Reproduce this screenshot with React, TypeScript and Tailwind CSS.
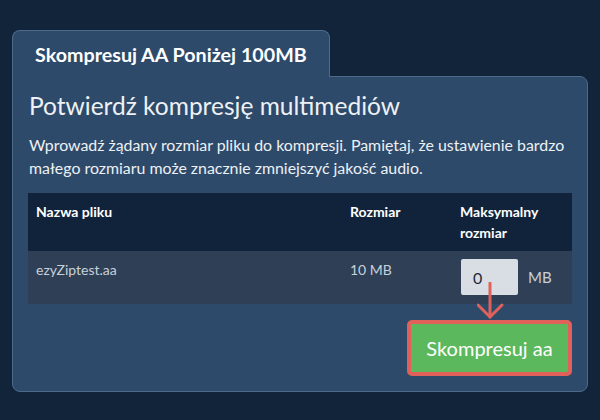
import React from 'react';

const font = { fontFamily: 'Lato, "Open Sans", sans-serif' };

const App: React.FC = () => {
  return (
    <div className="w-[600px] h-[420px] bg-[#12243a] pt-[30px] px-[12px]" style={font}>
      {/* Tab */}
      <div className="relative z-10 -mb-px w-fit h-[47px] pt-[12px] px-[22px] bg-[#2d4a6a] border border-b-0 border-[#4d6a8a] rounded-t-[8px]">
        <span className="text-[19.7px] leading-[24px] font-bold text-white">Skompresuj AA Poniżej 100MB</span>
      </div>

      {/* Card body */}
      <div className="relative bg-[#2d4a6a] border border-[#4d6a8a] rounded-b-[8px] rounded-tr-[8px] pt-[14px] pb-[15px] px-[15px]">
        <h2 className="pl-px text-[24.5px] leading-[29px] text-[#eef1f4]">Potwierdź kompresję multimediów</h2>
        <p className="mt-[13px] pl-px text-[15.9px] leading-[23px] text-[#eef1f4]">
          Wprowadź żądany rozmiar pliku do kompresji. Pamiętaj, że ustawienie bardzo małego rozmiaru może znacznie zmniejszyć jakość audio.
        </p>

        {/* Table */}
        <div className="mt-[14px] text-[14px] leading-[21px]">
          <div className="flex bg-[#10233a] h-[58px] text-white font-bold">
            <div className="w-[314px] px-[8px] pt-[8px]">Nazwa pliku</div>
            <div className="w-[110px] px-[8px] pt-[8px]">Rozmiar</div>
            <div className="w-[120px] px-[8px] pt-[8px]">Maksymalny rozmiar</div>
          </div>
          <div className="flex bg-[#2f4056] h-[53px] text-[#c8d0da]">
            <div className="w-[314px] px-[8px] pt-[8px]">ezyZiptest.aa</div>
            <div className="w-[110px] px-[8px] pt-[8px]">10 MB</div>
            <div className="w-[120px] px-[8px] pt-[8px] flex items-start">
              <div className="flex items-center gap-[10px]">
                <div className="ml-px w-[57px] h-[36px] bg-[#d9dde4] rounded-[2px] pl-[12px] flex items-center text-[16px] text-[#222b36]">
                  0
                </div>
                <span className="text-[15px] text-[#c8d0da]">MB</span>
              </div>
            </div>
          </div>
        </div>

        {/* Action */}
        <div className="mt-[16px] flex justify-end">
          <button className="w-[165px] h-[56px] border-[4px] border-[#e0605a] rounded-[5px] bg-[#5cb85c] text-white text-[20px] font-normal">
            Skompresuj aa
          </button>
        </div>

        {/* Annotation arrow */}
        <svg className="absolute left-[464px] top-[205px]" width="30" height="38" viewBox="0 0 30 38" fill="none">
          <path d="M13 1 L13 35" stroke="#e0605a" strokeWidth="3" strokeLinecap="round" />
          <path d="M1 23 L13 35 L25 23" stroke="#e0605a" strokeWidth="3" strokeLinecap="round" strokeLinejoin="round" />
        </svg>
      </div>
    </div>
  );
};

export default App;
